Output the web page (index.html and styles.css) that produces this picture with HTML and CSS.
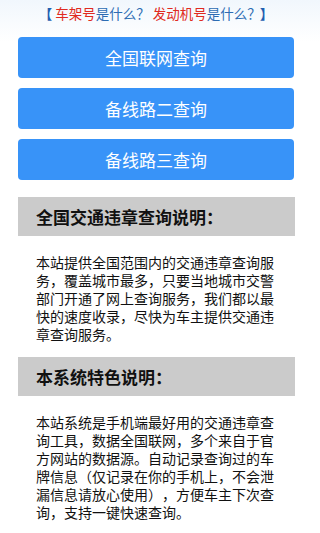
FILE: index.html
```html
<!DOCTYPE html>
<html lang="zh-CN">
<head>
<meta charset="utf-8">
<meta name="viewport" content="width=device-width, initial-scale=1">
<link rel="stylesheet" href="styles.css">
<title>交通违章查询</title>
</head>
<body>
<div class="page">
  <div class="tips"><span class="br">【</span> <span class="red">车架号</span>是什么？ <span class="q2"><span class="red">发动机号</span>是什么？</span> <span class="br end">】</span></div>
  <div class="buttons">
    <a class="btn">全国联网查询</a>
    <a class="btn">备线路二查询</a>
    <a class="btn">备线路三查询</a>
  </div>
  <div class="section">
    <div class="sec-title">全国交通违章查询说明：</div>
    <p class="sec-text">本站提供全国范围内的交通违章查询服务，覆盖城市最多，只要当地城市交警部门开通了网上查询服务，我们都以最快的速度收录，尽快为车主提供交通违章查询服务。</p>
  </div>
  <div class="section">
    <div class="sec-title">本系统特色说明：</div>
    <p class="sec-text">本站系统是手机端最好用的交通违章查询工具，数据全国联网，多个来自于官方网站的数据源。自动记录查询过的车牌信息（仅记录在你的手机上，不会泄漏信息请放心使用），方便车主下次查询，支持一键快速查询。</p>
  </div>
</div>
</body>
</html>
```
FILE: styles.css
```css
html, body {
  margin: 0;
  padding: 0;
}
body {
  background: linear-gradient(to bottom, #f1f7fd 0px, #ffffff 42px) no-repeat #ffffff;
  font-family: "Noto Sans CJK SC", sans-serif;
  color: #111111;
  text-spacing-trim: space-all;
  font-kerning: none;
}
.page {
  width: 320px;
  padding: 4px 0 0 0;
  box-sizing: border-box;
}
.tips {
  height: 18px;
  line-height: 18px;
  font-size: 13.5px;
  text-align: center;
  color: #2d6cb3;
  padding-right: 8px;
  white-space: nowrap;
}
.tips .br {
  color: #1f5fb0;
  font-weight: bold;
}
.tips .red {
  color: #e02a20;
}
.tips .q2 {
  margin-left: 0;
}
.tips .end {
  margin-left: -4px;
}
.buttons {
  display: flex;
  flex-direction: column;
  gap: 10px;
  margin: 15px 26px 0 18px;
}
.btn {
  display: flex;
  align-items: center;
  justify-content: center;
  height: 41px;
  background: #3893f8;
  color: #ffffff;
  border-radius: 4px;
  font-size: 17px;
  text-decoration: none;
}
.section {
  margin: 17px 25px 0 18px;
}
.section + .section {
  margin-top: 14px;
}
.sec-title {
  height: 39px;
  line-height: 39px;
  background: #cbcbcb;
  padding-left: 18px;
  font-size: 17px;
  font-weight: bold;
  color: #111111;
}
.sec-text {
  margin: 17px 0 0 0;
  padding: 0 18px;
  font-size: 14px;
  line-height: 18px;
  color: #111111;
}
```
